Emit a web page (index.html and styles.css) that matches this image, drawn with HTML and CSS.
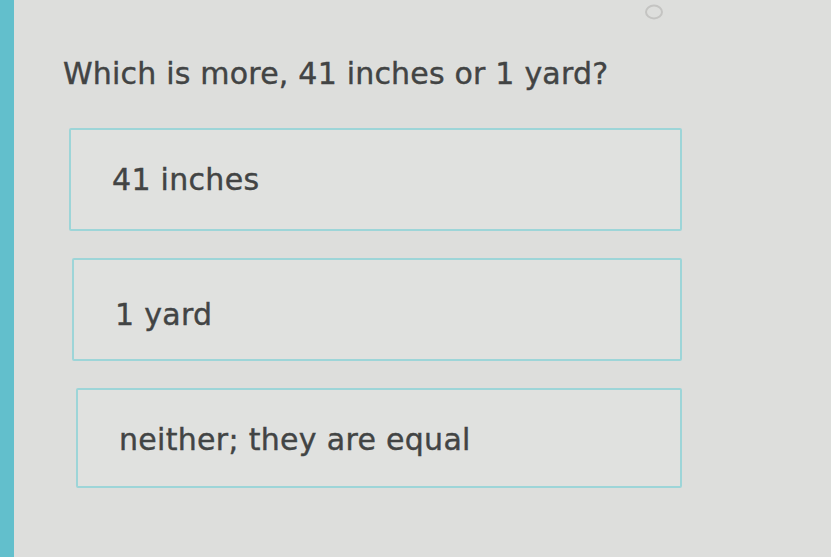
FILE: index.html
```html
<!DOCTYPE html>
<html>
<head>
<meta charset="utf-8">
<link rel="stylesheet" href="styles.css">
</head>
<body>
<div class="page">
  <div class="sidebar"></div>
  <div class="main">
    <div class="dot"><svg width="24" height="20" viewBox="0 0 24 20"><ellipse cx="12" cy="10" rx="8" ry="6.5" fill="none" stroke="#c4c4c2" stroke-width="2"/></svg></div>
    <h1 class="question">Which is more, 41 inches or 1 yard?</h1>
    <div class="choices">
      <div class="choice c1">41 inches</div>
      <div class="choice c2">1 yard</div>
      <div class="choice c3">neither; they are equal</div>
    </div>
  </div>
</div>
</body>
</html>
```
FILE: styles.css
```css
html, body {
  margin: 0;
  padding: 0;
  height: 100%;
}
body {
  background: #dddedc;
  font-family: "DejaVu Sans", Verdana, sans-serif;
  color: #424444;
}
.page {
  display: flex;
  height: 557px;
  overflow: hidden;
}
.sidebar {
  width: 14px;
  flex: none;
  background: #62bfcc;
}
.main {
  position: relative;
  flex: 1;
  padding: 56px 0 0 49px;
}
.dot {
  position: absolute;
  left: 628px;
  top: 2px;
}
.question {
  margin: 0;
  font-size: 30px;
  font-weight: normal;
  line-height: 36px;
  letter-spacing: 0.2px;
  -webkit-text-stroke: 0.4px #424444;
}
.choices {
  display: flex;
  flex-direction: column;
  gap: 27px;
  margin-top: 36px;
}
.choice {
  box-sizing: border-box;
  width: 613px;
  height: 103px;
  border: 2px solid #9dd5d8;
  border-radius: 2px;
  display: flex;
  align-items: center;
  padding-left: 41px;
  font-size: 30px;
  letter-spacing: 0.3px;
  -webkit-text-stroke: 0.4px #424444;
  background: #e0e1df;
}
.c1 { margin-left: 6px; padding-left: 41px; }
.c2 { margin-left: 9px; width: 610px; padding-left: 41px; padding-top: 10px; }
.c3 { margin-left: 13px; width: 606px; height: 100px; padding-left: 41px; padding-top: 2px; }
```
